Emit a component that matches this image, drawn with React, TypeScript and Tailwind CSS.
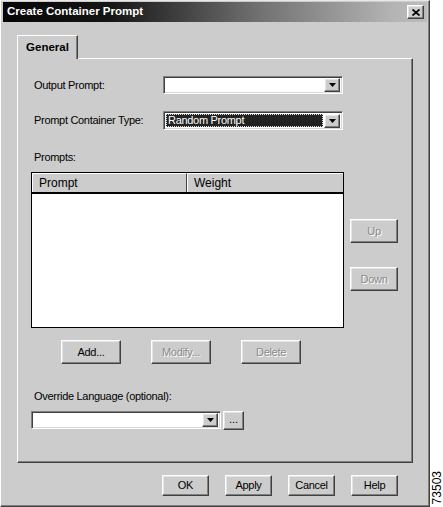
import { ReactNode } from 'react';

const raised =
  'border border-t-white border-l-white border-r-[#404040] border-b-[#404040] shadow-[inset_-1px_-1px_0_#808080,inset_1px_1px_0_#e4e4e4]';
const sunken =
  'border border-t-[#808080] border-l-[#808080] border-r-white border-b-white shadow-[inset_1px_1px_0_#404040,inset_-1px_-1px_0_#d8d8d8]';

const Arrow = () => (
  <svg width="7" height="4" viewBox="0 0 7 4">
    <path d="M0 0h7L3.5 4z" fill="#000" />
  </svg>
);

const DropButton = () => (
  <div className={`${raised} bg-[#cccccc] w-[16px] h-[14px] flex items-center justify-center`}>
    <Arrow />
  </div>
);

type ComboProps = { width: string; value?: string; focused?: boolean; height?: string };

const Combo = ({ width, value, focused, height = 'h-[18px]' }: ComboProps) => (
  <div className={`${sunken} ${width} ${height} bg-white flex items-center p-[2px] gap-[1px]`}>
    <div className="flex-1 h-full flex items-center">
      {focused && (
        <div className="w-full h-full bg-[#222] border border-dotted border-[#ddd] flex items-center px-[1px] text-white leading-none">
          {value}
        </div>
      )}
    </div>
    <DropButton />
  </div>
);

type BtnProps = { label: string; width: string; height: string; disabled?: boolean };

const Btn = ({ label, width, height, disabled }: BtnProps) => (
  <div
    className={`${raised} ${width} ${height} bg-[#cccccc] flex items-center justify-center ${
      disabled ? 'text-[#8a8a8a] [text-shadow:1px_1px_0_#fff]' : 'text-black'
    }`}
  >
    {label}
  </div>
);

const Label = ({ children }: { children: ReactNode }) => <span className="text-black">{children}</span>;

export default function App() {
  return (
    <div className="w-[443px] h-[507px] bg-white flex [font-family:'Liberation_Sans',Arial,sans-serif] text-[11px] tracking-[-0.3px] select-none">
      {/* dialog */}
      <div className="w-[430px] h-[507px] bg-[#cccccc] border border-t-[#e8e8e8] border-l-white border-r-[#404040] border-b-[#404040] shadow-[inset_-1px_-1px_0_#808080] flex flex-col">
        {/* title bar */}
        <div className="mt-[1px] mx-[2px] h-[20px] bg-[linear-gradient(to_right,#060606_0%,#151515_25%,#707070_60%,#b4b4b4_92%,#bcbcbc_100%)] flex items-center pl-[4px] pr-[3px]">
          <span className="flex-1 text-white font-bold text-[11.5px] tracking-normal">Create Container Prompt</span>
          <div className={`${raised} bg-[#cccccc] w-[17px] h-[14px] flex items-center justify-center`}>
            <svg width="8" height="7" viewBox="0 0 8 7">
              <path d="M0.5 0.5L7.5 6.5M7.5 0.5L0.5 6.5" stroke="#000" strokeWidth="1.7" />
            </svg>
          </div>
        </div>

        {/* tab */}
        <div className="mt-[13px] ml-[16px] flex">
          <div className="relative z-10 -mb-[1px] w-[61px] h-[24px] bg-[#cccccc] border-l border-t border-r border-l-white border-t-white border-r-[#404040] shadow-[inset_-1px_0_0_#808080] flex items-center justify-center font-bold text-[11.5px] tracking-normal pt-[1px]">
            General
          </div>
        </div>

        {/* panel */}
        <div className="ml-[16px] w-[396px] h-[405px] border border-t-white border-l-white border-r-[#404040] border-b-[#404040] shadow-[inset_-1px_-1px_0_#808080] flex flex-col pt-[17px] pl-[13px]">
          <div className="flex items-center h-[18px]">
            <div className="w-[132px] pl-[3px]">
              <Label>Output Prompt:</Label>
            </div>
            <Combo width="w-[180px]" />
          </div>

          <div className="flex items-center h-[19px] mt-[17px]">
            <div className="w-[132px] pl-[3px]">
              <Label>Prompt Container Type:</Label>
            </div>
            <Combo width="w-[180px]" height="h-[19px]" value="Random Prompt" focused />
          </div>

          <div className="mt-[20px] pl-[3px] h-[14px] leading-[14px]">
            <Label>Prompts:</Label>
          </div>

          <div className="mt-[8px] flex">
            {/* list */}
            <div className="w-[313px] h-[156px] border border-black bg-white flex flex-col">
              <div className="h-[21px] flex bg-[#cccccc] border-b-2 border-black text-[12px] tracking-normal">
                <div className="w-[155px] border-r border-r-[#404040] border-t border-l border-t-white border-l-white flex items-center pl-[6px]">
                  Prompt
                </div>
                <div className="flex-1 border-t border-l border-t-white border-l-white flex items-center pl-[6px]">
                  Weight
                </div>
              </div>
            </div>

            <div className="ml-[6px] flex flex-col pt-[47px] gap-[24px]">
              <Btn label="Up" width="w-[48px]" height="h-[24px]" disabled />
              <Btn label="Down" width="w-[48px]" height="h-[24px]" disabled />
            </div>
          </div>

          <div className="mt-[12px] ml-[30px] flex gap-[30px]">
            <Btn label="Add..." width="w-[60px]" height="h-[24px]" />
            <Btn label="Modify..." width="w-[60px]" height="h-[24px]" disabled />
            <Btn label="Delete" width="w-[60px]" height="h-[24px]" disabled />
          </div>

          <div className="mt-[25px] pl-[3px] h-[14px] leading-[14px]">
            <Label>Override Language (optional):</Label>
          </div>

          <div className="mt-[8px] flex items-start gap-[2px]">
            <Combo width="w-[190px]" />
            <div className={`${raised} bg-[#cccccc] w-[21px] h-[19px] flex items-center justify-center pb-[3px] tracking-normal`}>
              ...
            </div>
          </div>
        </div>

        {/* bottom buttons */}
        <div className="mt-[12px] ml-[161px] flex gap-[16px]">
          <Btn label="OK" width="w-[47px]" height="h-[21px]" />
          <Btn label="Apply" width="w-[47px]" height="h-[21px]" />
          <Btn label="Cancel" width="w-[47px]" height="h-[21px]" />
          <Btn label="Help" width="w-[47px]" height="h-[21px]" />
        </div>
      </div>

      {/* figure number strip */}
      <div className="flex-1 flex flex-col justify-end items-center pb-[3px]">
        <span className="[writing-mode:vertical-rl] rotate-180 text-[12px] tracking-normal text-black leading-none">73503</span>
      </div>
    </div>
  );
}
